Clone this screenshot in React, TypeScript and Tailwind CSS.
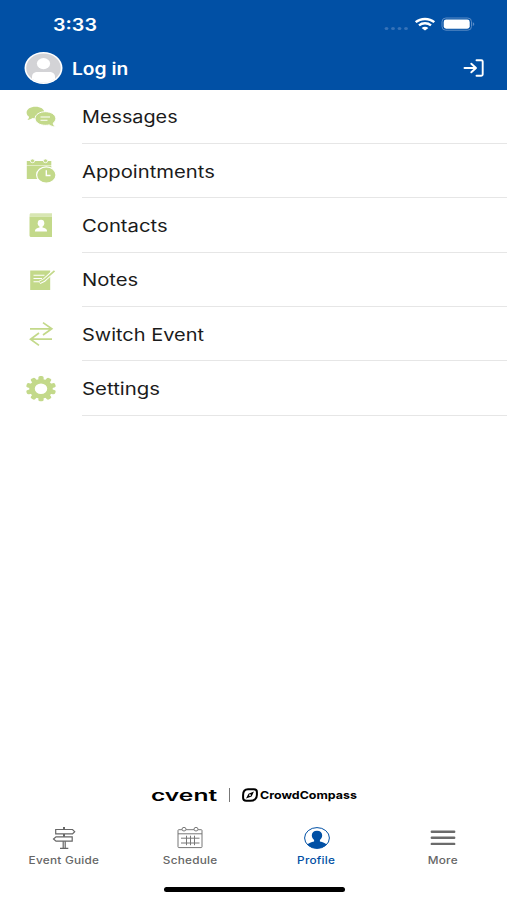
import type { ReactNode } from 'react';

const GREEN = '#c3d98a';

function MessagesIcon() {
    return (
        <svg className="w-8 h-7" viewBox="0 0 32 28" fill={GREEN}>
            <path d="M10.5 3.7c5 0 8.9 2.4 8.9 5.7s-3.9 5.9-8.9 5.9c-1 0-2-.1-2.9-.3C6 16.1 4.3 16.8 2.4 16.9c1-.9 1.5-2 1.7-3.2C2.5 12.7 1.6 11.1 1.6 9.4c0-3.3 3.9-5.7 8.9-5.7z" />
            <path
                d="M20.3 8.7c5.7 0 10.5 2.9 10.5 6.8 0 1.9-1 3.5-2.6 4.6.2 1.3.9 2.8 2.1 3.8-2.3-.1-4.3-.8-6.1-2-1.1.3-2.5.4-3.8.4-5.7 0-10.3-2.9-10.3-6.8S14.7 8.7 20.3 8.7z"
                stroke="#fff"
                strokeWidth="1"
            />
            <path d="M15.5 14H25M15.5 17.3h7" stroke="#fff" strokeWidth="1.1" />
        </svg>
    );
}

function AppointmentsIcon() {
    return (
        <svg className="w-8 h-7" viewBox="0 0 32 28" fill={GREEN}>
            <path d="M1.8 4h24.5v4H1.8zM1.8 8.6h24.5V22H1.8z" />
            <ellipse cx="7.5" cy="3.8" rx="2.2" ry="1.9" stroke="#fff" strokeWidth=".8" />
            <ellipse cx="20.5" cy="3.8" rx="2.2" ry="1.9" stroke="#fff" strokeWidth=".8" />
            <ellipse cx="21.3" cy="18" rx="9.7" ry="8.2" stroke="#fff" strokeWidth="1.2" />
            <path d="M21.3 13.3v5.2h4.2" fill="none" stroke="#fff" strokeWidth="1.4" />
        </svg>
    );
}

function ContactsIcon() {
    return (
        <svg className="w-8 h-7" viewBox="0 0 32 28" fill={GREEN}>
            <path d="M6 2.3h21v3.4H4.6V3.8c0-.9.5-1.5 1.4-1.5z" opacity=".65" />
            <path d="M4.5 5.7H27V26H6.2c-1 0-1.7-.6-1.7-1.5z" />
            <ellipse cx="16" cy="12.2" rx="3.3" ry="3.4" fill="#fff" />
            <path d="M14.5 14h3v2.5c2.7.6 4.6 1.3 4.6 4H9.9c0-2.7 1.9-3.4 4.6-4z" fill="#fff" />
        </svg>
    );
}

function NotesIcon() {
    return (
        <svg className="w-8 h-7" viewBox="0 0 32 28">
            <path d="M5.2 4.5h20V24h-20z" fill={GREEN} />
            <path d="M8.5 9.3h11M8.5 12.5H17M8.5 15.7h6" stroke="#fff" strokeWidth="1.1" />
            <path d="M29.5 4.5 19 14.3l-4.5 2.2" stroke="#fff" strokeWidth="3.6" fill="none" />
            <path d="M29.5 4.8 19 14.1l-4.2 2.2" stroke={GREEN} strokeWidth="1.7" fill="none" />
        </svg>
    );
}

function SwitchIcon() {
    return (
        <svg className="w-8 h-7" viewBox="0 0 32 28" fill="none" stroke={GREEN} strokeWidth="1.7">
            <path d="M5 8.8h21.5M18 2.6l8.8 6.2L18 15M27 19.2H5.5M14 13l-8.5 6.2 8.5 6.2" />
        </svg>
    );
}

function SettingsIcon() {
    return (
        <svg className="w-8 h-7" viewBox="0 0 32 28">
            <g transform="translate(16 13.7) scale(1.2 1)" fill={GREEN}>
                {[0, 36, 72, 108, 144, 180, 216, 252, 288, 324].map((angle) => (
                    <rect
                        key={angle}
                        x="-2.2"
                        y="-12.6"
                        width="4.4"
                        height="5"
                        rx="1.6"
                        transform={`rotate(${angle})`}
                    />
                ))}
                <circle r="7.5" fill="none" stroke={GREEN} strokeWidth="4.6" />
            </g>
        </svg>
    );
}

function SignpostIcon() {
    return (
        <svg className="w-[26px] h-6" viewBox="0 0 26 24" fill="none" stroke="#666" strokeWidth="1.2">
            <path d="M4.7 3.5h16.8l2.2 2.2-2.2 2.2H4.7zM21.2 10.8H5L2.5 13 5 15.2h16.2z" />
            <path d="M13 1v2.5M13 8v2.8" strokeWidth="2" />
            <path d="M12.2 15.2v7M14.2 15.2v7M9 22.3h8.3" />
        </svg>
    );
}

function ScheduleIcon() {
    return (
        <svg className="w-[26px] h-6" viewBox="0 0 26 24" fill="none" stroke="#777" strokeWidth="1">
            <path d="M5 3.7H1.8c-.5 0-.8.3-.8.7v16.4c0 .5.3.8.8.8h22.4c.5 0 .8-.3.8-.8V4.4c0-.4-.3-.7-.8-.7H21M9 3.7h8M1 7.8h24" />
            <ellipse cx="7" cy="3.2" rx="2" ry="1.8" />
            <ellipse cx="19" cy="3.2" rx="2" ry="1.8" />
            <path d="M4 12.2h18.5M4 17h18.5M9.5 9.7v9.5M13.5 9.7v9.5M17.5 9.7v9.5" />
        </svg>
    );
}

function ProfileIcon() {
    return (
        <svg className="w-[26px] h-6" viewBox="0 0 26 24" fill="#0150a5">
            <ellipse cx="13" cy="12" rx="12.4" ry="10.4" fill="none" stroke="#0150a5" strokeWidth="1" />
            <path d="M13 4.7c3.2 0 5.2 1.9 5.2 4.6 0 2.2-1 3.6-2.3 4.6v1.5c3 .7 5.3 1.4 6.600 3-2.200 2.500-5.700 4-9.500 4s-7.300-1.500-9.500-4c1.300-1.600 3.600-2.300 6.600-3v-1.500c-1.300-1-2.300-2.400-2.300-4.600 0-2.700 2-4.600 5.200-4.600z" />
        </svg>
    );
}

function MoreIcon() {
    return (
        <svg className="w-[26px] h-6" viewBox="0 0 26 24" stroke="#6b6b6b" strokeWidth="2.4" strokeLinecap="round">
            <path d="M1.8 5.7h22.4M1.8 11.8h22.4M1.8 17.9h22.4" />
        </svg>
    );
}

const menu: { label: string; icon: ReactNode; scale: string }[] = [
    { label: 'Messages', icon: <MessagesIcon />, scale: 'scale-x-[1.165]' },
    { label: 'Appointments', icon: <AppointmentsIcon />, scale: 'scale-x-[1.190]' },
    { label: 'Contacts', icon: <ContactsIcon />, scale: 'scale-x-[1.190]' },
    { label: 'Notes', icon: <NotesIcon />, scale: 'scale-x-[1.190]' },
    { label: 'Switch Event', icon: <SwitchIcon />, scale: 'scale-x-[1.175]' },
    { label: 'Settings', icon: <SettingsIcon />, scale: 'scale-x-[1.200]' },
];

const tabs: { label: string; icon: ReactNode; active?: boolean }[] = [
    { label: 'Event Guide', icon: <SignpostIcon /> },
    { label: 'Schedule', icon: <ScheduleIcon /> },
    { label: 'Profile', icon: <ProfileIcon />, active: true },
    { label: 'More', icon: <MoreIcon /> },
];

export default function App() {
    return (
        <div className="flex h-[900px] w-full flex-col overflow-hidden bg-white font-['Inter',sans-serif] text-[#1b1b1b]">
            <header className="h-[89.5px] shrink-0 bg-[#0150a5] text-white">
                {/* Status bar */}
                <div className="flex h-12 items-center justify-between pl-[53px] pr-[31px]">
                    <span className="mt-0.5 origin-left scale-x-[1.160] text-[17px] font-semibold leading-none">3:33</span>
                    <svg className="h-4 w-[92px]" viewBox="0 0 92 16" fill="none">
                        <g fill="#3672b8">
                            <ellipse cx="2.5" cy="12.5" rx="1.9" ry="1.6" />
                            <ellipse cx="9" cy="12.5" rx="1.9" ry="1.6" />
                            <ellipse cx="15.5" cy="12.5" rx="1.9" ry="1.6" />
                            <ellipse cx="22" cy="12.5" rx="1.9" ry="1.6" />
                        </g>
                        <path d="M31.7 6.2c5-4.3 13.6-4.3 18.6 0M35 9.4c3.4-2.8 8.6-2.8 12 0" stroke="#fff" strokeWidth="2.4" />
                        <path d="M37.6 11.9c2-1.6 4.8-1.6 6.8 0L41 14.6z" fill="#fff" />
                        <rect x="58" y="2" width="29.5" height="12.2" rx="3.8" stroke="#5a8bc6" />
                        <rect x="59.7" y="3.5" width="26" height="9.2" rx="2.4" fill="#fff" />
                        <path d="M88.8 6.3c2 .6 2 3.2 0 3.8z" fill="#5a8bc6" />
                    </svg>
                </div>
                {/* Login bar */}
                <div className="flex h-10 items-center pl-6 pr-[22px]">
                    <svg className="h-8 w-[39px]" viewBox="0 0 39 32">
                        <defs>
                            <clipPath id="avatar">
                                <ellipse cx="19.5" cy="16" rx="17.3" ry="14.4" />
                            </clipPath>
                        </defs>
                        <ellipse cx="19.5" cy="16" rx="19" ry="15.9" fill="#fff" />
                        <g clipPath="url(#avatar)">
                            <path d="M0 0h39v32H0z" fill="#d3d3d6" />
                            <ellipse cx="19.5" cy="11.6" rx="6.6" ry="5.6" fill="#fff" />
                            <path d="M8 32v-7c0-3.2 2-5 6-5h11c4 0 6 1.8 6 5v7z" fill="#fff" />
                        </g>
                    </svg>
                    <span className="ml-[9px] mt-0.5 origin-left scale-x-[1.130] text-[17px] font-semibold leading-none">Log in</span>
                    <svg className="ml-auto h-5 w-[22px]" viewBox="0 0 22 20" fill="none" stroke="#fff" strokeWidth="1.9" strokeLinecap="round" strokeLinejoin="round">
                        <path d="M1.5 10h11.2M8.3 5.7 13 10l-4.7 4.3M13.5 2.3h4.8c.8 0 1.4.5 1.4 1.2v13c0 .7-.6 1.2-1.4 1.2h-4.8" />
                    </svg>
                </div>
            </header>

            <main className="flex-1">
                {menu.map((item) => (
                    <div key={item.label} className="flex h-[54.4px] items-center pl-[25px]">
                        {item.icon}
                        <div className="ml-[24.5px] flex h-full flex-1 items-center border-b border-[#e6e6e6]">
                            <span className={`mt-[3px] origin-left whitespace-nowrap text-[17px] leading-none ${item.scale}`}>
                                {item.label}
                            </span>
                        </div>
                    </div>
                ))}
            </main>

            {/* Branding */}
            <div className="flex h-6 shrink-0 items-center pl-[151px] text-black">
                <div className="w-[78px]">
                    <span className="inline-block origin-left scale-x-[1.640] text-[15px] font-semibold leading-none">cvent</span>
                </div>
                <div className="h-[14px] w-px bg-[#777]" />
                <svg className="ml-3 h-[14px] w-4" viewBox="0 0 16 14" fill="none" stroke="#000" strokeWidth="2">
                    <path d="M6 1.2h5.8c1.9 0 3.1 1 3.1 2.7V7c0 3.4-2.7 5.8-6.6 5.8H4.2c-1.9 0-3.1-1-3.1-2.7V7c0-3.5 1.8-5.8 4.9-5.8z" />
                    <path d="M12 3.5 9.6 8.4 4 10.6l2.5-4.900z" fill="#000" stroke="none" />
                    <ellipse cx="8" cy="7.1" rx="1" ry=".9" fill="#fff" stroke="none" />
                </svg>
                <span className="ml-[2px] origin-left scale-x-[1.130] text-[11px] font-bold leading-none">CrowdCompass</span>
            </div>

            <nav className="mt-[19px] flex h-[46px] shrink-0 pr-px">
                {tabs.map((tab) => (
                    <div
                        key={tab.label}
                        className={`flex flex-1 flex-col items-center first:pl-px ${tab.active ? 'text-[#0150a5]' : 'text-[#666]'}`}
                    >
                        {tab.icon}
                        <span className="mt-[5px] scale-x-[1.180] whitespace-nowrap text-[10px] font-medium leading-none tracking-[0.2px]">
                            {tab.label}
                        </span>
                    </div>
                ))}
            </nav>

            {/* Home indicator */}
            <div className="mb-2 mt-[15px] flex h-[5px] shrink-0 justify-center pl-px">
                <div className="h-full w-[181px] rounded-full bg-black" />
            </div>
        </div>
    );
}
